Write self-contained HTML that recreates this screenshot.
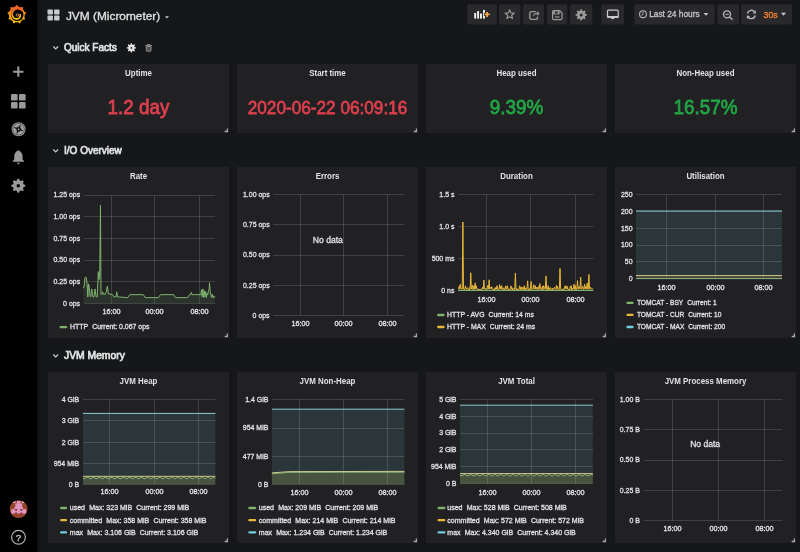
<!DOCTYPE html>
<html><head><meta charset="utf-8"><title>JVM (Micrometer) - Grafana</title>
<style>html,body{margin:0;padding:0;background:#161719;width:800px;height:552px;overflow:hidden;font-family:"Liberation Sans",sans-serif}svg{display:block;will-change:transform}</style>
</head><body>
<svg width="800" height="552" viewBox="0 0 800 552" font-family="&quot;Liberation Sans&quot;, sans-serif"><defs><linearGradient id="sh" x1="0" y1="0" x2="1" y2="0"><stop offset="0" stop-color="#0e0f10"/><stop offset="1" stop-color="#161719"/></linearGradient></defs>
<rect x="37" y="0" width="5" height="552" fill="url(#sh)" rx="0" />
<rect x="0" y="0" width="37" height="552" fill="#000" rx="0" />
<defs><linearGradient id="lg" x1="0" y1="0" x2="0" y2="1"><stop offset="0" stop-color="#f05a28"/><stop offset="1" stop-color="#fbca0a"/></linearGradient></defs>
<polygon points="16.80,4.80 17.58,5.50 18.18,6.55 18.86,6.70 19.53,6.91 20.17,7.18 20.78,7.50 21.93,7.08 22.97,7.05 23.12,8.08 22.90,9.28 23.33,9.83 23.70,10.42 24.02,11.03 24.29,11.67 25.43,12.09 26.25,12.73 25.70,13.62 24.77,14.40 24.74,15.09 24.65,15.78 24.50,16.46 24.29,17.13 24.90,18.18 25.11,19.20 24.12,19.53 22.90,19.52 22.43,20.03 21.92,20.50 21.37,20.93 20.78,21.30 20.58,22.50 20.08,23.42 19.11,23.03 18.18,22.25 17.49,22.34 16.80,22.37 16.11,22.34 15.42,22.25 14.49,23.03 13.52,23.42 13.02,22.50 12.82,21.30 12.23,20.93 11.68,20.50 11.17,20.03 10.70,19.52 9.48,19.53 8.49,19.20 8.70,18.18 9.31,17.13 9.10,16.46 8.95,15.78 8.86,15.09 8.83,14.40 7.90,13.62 7.35,12.73 8.17,12.09 9.31,11.67 9.58,11.03 9.90,10.42 10.27,9.83 10.70,9.28 10.48,8.08 10.63,7.05 11.67,7.08 12.82,7.50 13.43,7.18 14.07,6.91 14.74,6.70 15.42,6.55 16.02,5.50" fill="url(#lg)"/>
<circle cx="17.2" cy="14.8" r="6.3" fill="#000"/>
<polyline points="22.26,10.56 21.78,10.14 21.28,9.77 20.74,9.45 20.19,9.19 19.61,8.99 19.03,8.84 18.44,8.75 17.85,8.72 17.26,8.75 16.69,8.83 16.13,8.97 15.59,9.16 15.08,9.39 14.60,9.68 14.16,10.00 13.75,10.36 13.38,10.76 13.06,11.18 12.78,11.63 12.55,12.10 12.37,12.58 12.23,13.07 12.15,13.57 12.12,14.07 12.13,14.56 12.19,15.04 12.30,15.51 12.45,15.96 12.64,16.39 12.87,16.80 13.13,17.17 13.43,17.51 13.75,17.82 14.10,18.09 14.46,18.33 14.85,18.52 15.24,18.68 15.64,18.79 16.05,18.86 16.45,18.89 16.85,18.88 17.25,18.84 17.62,18.75 17.99,18.63 18.33,18.48 18.66,18.30 18.96,18.09 19.23,17.86 19.48,17.60 19.69,17.33 19.87,17.04 20.03,16.74 20.15,16.43 20.23,16.12 20.29,15.80 20.31,15.49 20.30,15.18 20.26,14.88 20.19,14.59" fill="none" stroke="url(#lg)" stroke-width="1.7" stroke-linecap="round"/>
<circle cx="17.400000000000002" cy="15.0" r="1.3" fill="none" stroke="#e8a070" stroke-width="0.8"/>
<path d="M18.3,66.6 V76.8 M13.1,71.7 H23.5" stroke="#9a9a9a" stroke-width="2.1"/>
<rect x="11" y="94" width="6.6" height="6.6" fill="#9a9a9a" rx="1.2" />
<rect x="11" y="102" width="6.6" height="6.6" fill="#9a9a9a" rx="1.2" />
<rect x="19" y="94" width="6.6" height="6.6" fill="#9a9a9a" rx="1.2" />
<rect x="19" y="102" width="6.6" height="6.6" fill="#9a9a9a" rx="1.2" />
<circle cx="18.6" cy="129.2" r="7.0" fill="#9a9a9a"/>
<circle cx="18.6" cy="129.2" r="5.8" fill="#a0a0a0" stroke="#3a3a3a" stroke-width="0.6"/>
<path d="M18.6,123.6 L19.8,128 L24.2,129.2 L19.8,130.4 L18.6,134.8 L17.4,130.4 L13,129.2 L17.4,128 Z" fill="#141414" transform="rotate(22 18.6 129.2)"/>
<path d="M18.6,125.6 L19.3,128.5 L22.2,129.2 L19.3,129.9 L18.6,132.8 L17.9,129.9 L15,129.2 L17.9,128.5 Z" fill="#141414" transform="rotate(67 18.6 129.2)"/>
<circle cx="18.6" cy="129.2" r="0.8" fill="#bbbbbb"/>
<path d="M18.3,150.3 C15.2,151.6 14.2,154.2 14.2,157.2 L14.2,159.6 L12.8,161.0 V161.8 H24.0 V161.0 L22.6,159.6 L22.6,157.2 C22.6,154.2 21.6,151.6 18.3,150.3 Z" fill="#9a9a9a"/>
<path d="M16.6,162.8 H20.2 L18.4,164.4 Z" fill="#9a9a9a"/>
<polygon points="25.27,185.01 25.27,186.39 23.47,187.27 23.06,188.25 23.71,190.14 22.74,191.11 20.85,190.46 19.87,190.87 18.99,192.67 17.61,192.67 16.73,190.87 15.75,190.46 13.86,191.11 12.89,190.14 13.54,188.25 13.13,187.27 11.33,186.39 11.33,185.01 13.13,184.13 13.54,183.15 12.89,181.26 13.86,180.29 15.75,180.94 16.73,180.53 17.61,178.73 18.99,178.73 19.87,180.53 20.85,180.94 22.74,180.29 23.71,181.26 23.06,183.15 23.47,184.13" fill="#9a9a9a"/>
<circle cx="18.3" cy="185.7" r="1.7" fill="#000"/>
<clipPath id="avc"><circle cx="18.6" cy="509.1" r="8.9"/></clipPath>
<circle cx="18.6" cy="509.1" r="8.9" fill="#96462a"/>
<g clip-path="url(#avc)">
<rect x="13.0" y="500.8" width="2.4" height="2.2" fill="#e6b4c4" rx="0" />
<rect x="16.9" y="500.8" width="3.6" height="2.8" fill="#e096be" rx="0" />
<rect x="21.9" y="500.8" width="2.4" height="2.2" fill="#e6b4c4" rx="0" />
<rect x="15.3" y="503.4" width="6.8" height="3.8" fill="#e096be" rx="0" />
<rect x="14.4" y="507.0" width="8.6" height="2.4" fill="#e096be" rx="0" />
<rect x="11.2" y="509.2" width="15.0" height="4.4" fill="#e096be" rx="0" />
<rect x="15.2" y="509.0" width="1.7" height="1.7" fill="#7a2c34" rx="0" />
<rect x="20.5" y="509.0" width="1.7" height="1.7" fill="#7a2c34" rx="0" />
<rect x="15.2" y="512.6" width="1.7" height="1.5" fill="#7a2c34" rx="0" />
<rect x="20.5" y="512.6" width="1.7" height="1.5" fill="#7a2c34" rx="0" />
</g>
<circle cx="18.5" cy="537.2" r="6.9" fill="none" stroke="#b4b4b4" stroke-width="1.25"/>
<text x="18.60" y="540.80" font-size="9.8" fill="#b4b4b4" font-weight="normal" text-anchor="middle"  stroke="#b4b4b4" stroke-width="0.45">?</text>
<rect x="47.5" y="9.5" width="5.4" height="5.0" fill="#c8c9ca" rx="0.8" />
<rect x="47.5" y="15.5" width="5.4" height="5.0" fill="#c8c9ca" rx="0.8" />
<rect x="54.1" y="9.5" width="5.4" height="5.0" fill="#c8c9ca" rx="0.8" />
<rect x="54.1" y="15.5" width="5.4" height="5.0" fill="#c8c9ca" rx="0.8" />
<text transform="translate(65.90,19.60) scale(1.025,1)" font-size="11.6" fill="#e0e1e2" font-weight="normal" text-anchor="start"  stroke="#e0e1e2" stroke-width="0.3">JVM (Micrometer)</text>
<path d="M165,16.2 L169,16.2 L167,18.4 Z" fill="#c8c9ca"/>
<rect x="467.2" y="4.3" width="29.600000000000023" height="20.2" fill="#29292c" rx="2" />
<rect x="499" y="4.3" width="21.5" height="20.2" fill="#29292c" rx="2" />
<rect x="523" y="4.3" width="21" height="20.2" fill="#29292c" rx="2" />
<rect x="547" y="4.3" width="20.200000000000045" height="20.2" fill="#29292c" rx="2" />
<rect x="570" y="4.3" width="22.299999999999955" height="20.2" fill="#29292c" rx="2" />
<rect x="601.3" y="4.3" width="22.700000000000045" height="20.2" fill="#29292c" rx="2" />
<rect x="634.3" y="4.3" width="80.30000000000007" height="20.2" fill="#29292c" rx="2" />
<rect x="717.3" y="4.3" width="21.700000000000045" height="20.2" fill="#29292c" rx="2" />
<rect x="741.2" y="4.3" width="50.89999999999998" height="20.2" fill="#29292c" rx="2" />
<rect x="474.2" y="12.9" width="1.95" height="5.700000000000001" fill="#ececec" rx="0" />
<rect x="477.1" y="11.1" width="1.95" height="7.500000000000002" fill="#ececec" rx="0" />
<rect x="480.0" y="13.5" width="1.95" height="5.100000000000001" fill="#ececec" rx="0" />
<rect x="483.0" y="9.9" width="1.95" height="8.700000000000001" fill="#ececec" rx="0" />
<path d="M487.1,11.2 V17.6 M483.9,14.4 H490.3" stroke="#262628" stroke-width="3.4"/>
<path d="M487.1,11.9 V17 M484.5,14.4 H489.8" stroke="#f6a545" stroke-width="1.8"/>
<polygon points="509.70,9.70 510.93,12.90 514.36,13.09 511.70,15.25 512.58,18.56 509.70,16.70 506.82,18.56 507.70,15.25 505.04,13.09 508.47,12.90" fill="none" stroke="#9a9a9a" stroke-width="1.1" stroke-linejoin="round"/>
<path d="M535.8,11.6 H531.6 Q529.8,11.6 529.8,13.4 V17.6 Q529.8,19.4 531.6,19.4 H535.8 Q537.6,19.4 537.6,17.6 V16.6" fill="none" stroke="#9a9a9a" stroke-width="1.4"/>
<path d="M532.6,17 C532.6,14 534.4,12.6 537,12.6 V10.6 L540,13.4 L537,16.2 V14.4 C535.2,14.4 533.8,15.2 532.6,17 Z" fill="#9a9a9a" stroke="#29292c" stroke-width="0.5"/>
<path d="M553.6,10.6 H559.6 L562,13 V18.4 Q562,19.6 560.8,19.6 H553.8 Q552.6,19.6 552.6,18.4 V11.6 Q552.6,10.6 553.6,10.6 Z" fill="none" stroke="#9a9a9a" stroke-width="1.2"/>
<rect x="553.2" y="11.2" width="6.4" height="3.2" fill="#9a9a9a" rx="0" />
<rect x="555.0" y="11.6" width="2.6" height="2.0" fill="#29292c" rx="0" />
<rect x="555.0" y="16.4" width="4.6" height="1.2" fill="#9a9a9a" rx="0" />
<polygon points="586.87,14.34 586.87,15.46 585.22,16.12 584.90,16.88 585.61,18.52 584.82,19.31 583.18,18.60 582.42,18.92 581.76,20.57 580.64,20.57 579.98,18.92 579.22,18.60 577.58,19.31 576.79,18.52 577.50,16.88 577.18,16.12 575.53,15.46 575.53,14.34 577.18,13.68 577.50,12.92 576.79,11.28 577.58,10.49 579.22,11.20 579.98,10.88 580.64,9.23 581.76,9.23 582.42,10.88 583.18,11.20 584.82,10.49 585.61,11.28 584.90,12.92 585.22,13.68" fill="#9a9a9a"/>
<circle cx="581.2" cy="14.9" r="1.5" fill="#29292c"/>
<rect x="607.5" y="10.1" width="10.7" height="7.2" rx="1" fill="none" stroke="#c8c9ca" stroke-width="1.2"/>
<rect x="607.2" y="16.0" width="11.3" height="1.9" fill="#c8c9ca" rx="0" />
<rect x="611.3" y="17.8" width="2.8" height="1.3" fill="#c8c9ca" rx="0" />
<circle cx="643" cy="14.2" r="3.4" fill="none" stroke="#b8b9ba" stroke-width="1.1"/>
<path d="M643,11.8 V14.3 L641.5,15.6" fill="none" stroke="#b8b9ba" stroke-width="0.9"/>
<text transform="translate(649.20,17.30) scale(0.935,1)" font-size="8.9" fill="#bfc0c1" font-weight="normal" text-anchor="start"  stroke="#bfc0c1" stroke-width="0.35">Last 24 hours</text>
<path d="M703.6,13 L708.3,13 L706,15.7 Z" fill="#c8c9ca"/>
<circle cx="727" cy="14.3" r="3.5" fill="none" stroke="#b8b9ba" stroke-width="1.3"/>
<path d="M729.6,16.9 L732.6,19.7" stroke="#b8b9ba" stroke-width="1.4"/>
<path d="M725.3,14.3 H728.7" stroke="#b8b9ba" stroke-width="1"/>
<path d="M747.5,13.5 A4,4 0 0 1 755,12.5 M755.2,15.5 A4,4 0 0 1 747.6,16.2" fill="none" stroke="#b8b9ba" stroke-width="1.3"/>
<path d="M755.8,10.3 L755.8,13.6 L752.6,13.4 Z M746.9,19 L746.9,15.6 L750.1,15.9 Z" fill="#b8b9ba"/>
<text transform="translate(763.60,17.60) scale(0.98,1)" font-size="8.9" fill="#e67a30" font-weight="normal" text-anchor="start"  stroke="#e67a30" stroke-width="0.45">30s</text>
<path d="M781,12.8 L786,12.8 L783.5,15.7 Z" fill="#c8c9ca"/>
<path d="M53.3,46.5 L55.7,48.9 L58.1,46.5" fill="none" stroke="#c8c9ca" stroke-width="1.3"/>
<text transform="translate(64.00,50.50) scale(0.955,1)" font-size="10.5" fill="#e0e1e2" font-weight="normal" text-anchor="start"  stroke="#e0e1e2" stroke-width="0.7">Quick Facts</text>
<polygon points="136.08,47.44 136.08,48.36 134.46,48.83 134.22,49.41 135.03,50.88 134.38,51.53 132.91,50.72 132.33,50.96 131.86,52.58 130.94,52.58 130.47,50.96 129.89,50.72 128.42,51.53 127.77,50.88 128.58,49.41 128.34,48.83 126.72,48.36 126.72,47.44 128.34,46.97 128.58,46.39 127.77,44.92 128.42,44.27 129.89,45.08 130.47,44.84 130.94,43.22 131.86,43.22 132.33,44.84 132.91,45.08 134.38,44.27 135.03,44.92 134.22,46.39 134.46,46.97" fill="#e8e8e8"/>
<circle cx="131.4" cy="47.9" r="0.9" fill="#161719"/>
<path d="M145.3,45.6 H152 M147.4,45.6 V44.6 H149.9 V45.6" stroke="#8e8e8e" stroke-width="1" fill="none"/>
<path d="M146.3,46.4 H151 V50.6 Q151,51.2 150.4,51.2 H146.9 Q146.3,51.2 146.3,50.6 Z" fill="#505050" stroke="#8e8e8e" stroke-width="1"/>
<path d="M53.3,149.5 L55.7,151.9 L58.1,149.5" fill="none" stroke="#c8c9ca" stroke-width="1.3"/>
<text transform="translate(64.00,153.50) scale(0.955,1)" font-size="10.5" fill="#e0e1e2" font-weight="normal" text-anchor="start"  stroke="#e0e1e2" stroke-width="0.7">I/O Overview</text>
<path d="M53.3,354.5 L55.7,356.9 L58.1,354.5" fill="none" stroke="#c8c9ca" stroke-width="1.3"/>
<text transform="translate(64.00,358.50) scale(0.985,1)" font-size="10.5" fill="#e0e1e2" font-weight="normal" text-anchor="start"  stroke="#e0e1e2" stroke-width="0.7">JVM Memory</text>
<rect x="48" y="64" width="181" height="69" fill="#212124" rx="0" />
<text transform="translate(138.50,76.00) scale(0.9,1)" font-size="8.8" fill="#e0e1e2" font-weight="bold" text-anchor="middle" >Uptime</text>
<path d="M224.7,131.5 H227.4 V128.6" stroke="#a8a8a8" stroke-width="1.3" fill="none"/>
<text transform="translate(138.50,114.00) scale(0.92,1)" font-size="20.5" fill="#dc3f4d" font-weight="normal" text-anchor="middle"  stroke="#dc3f4d" stroke-width="0.8">1.2 day</text>
<rect x="237" y="64" width="181" height="69" fill="#212124" rx="0" />
<text transform="translate(327.50,76.00) scale(0.9,1)" font-size="8.8" fill="#e0e1e2" font-weight="bold" text-anchor="middle" >Start time</text>
<path d="M413.7,131.5 H416.4 V128.6" stroke="#a8a8a8" stroke-width="1.3" fill="none"/>
<text transform="translate(327.50,113.50) scale(0.905,1)" font-size="19" fill="#dc3f4d" font-weight="normal" text-anchor="middle"  stroke="#dc3f4d" stroke-width="0.75">2020-06-22 06:09:16</text>
<rect x="426" y="64" width="181" height="69" fill="#212124" rx="0" />
<text transform="translate(516.50,76.00) scale(0.9,1)" font-size="8.8" fill="#e0e1e2" font-weight="bold" text-anchor="middle" >Heap used</text>
<path d="M602.7,131.5 H605.4 V128.6" stroke="#a8a8a8" stroke-width="1.3" fill="none"/>
<text transform="translate(516.50,114.00) scale(0.92,1)" font-size="20.5" fill="#22a444" font-weight="normal" text-anchor="middle"  stroke="#22a444" stroke-width="0.8">9.39%</text>
<rect x="615" y="64" width="181" height="69" fill="#212124" rx="0" />
<text transform="translate(705.50,76.00) scale(0.9,1)" font-size="8.8" fill="#e0e1e2" font-weight="bold" text-anchor="middle" >Non-Heap used</text>
<path d="M791.7,131.5 H794.4 V128.6" stroke="#a8a8a8" stroke-width="1.3" fill="none"/>
<text transform="translate(705.50,114.00) scale(0.92,1)" font-size="20.5" fill="#22a444" font-weight="normal" text-anchor="middle"  stroke="#22a444" stroke-width="0.8">16.57%</text>
<rect x="48" y="167" width="181" height="171" fill="#212124" rx="0" />
<text transform="translate(138.50,178.90) scale(0.9,1)" font-size="8.8" fill="#e0e1e2" font-weight="bold" text-anchor="middle" >Rate</text>
<path d="M224.7,336.5 H227.4 V333.6" stroke="#a8a8a8" stroke-width="1.3" fill="none"/>
<rect x="237" y="167" width="181" height="171" fill="#212124" rx="0" />
<text transform="translate(327.50,178.90) scale(0.9,1)" font-size="8.8" fill="#e0e1e2" font-weight="bold" text-anchor="middle" >Errors</text>
<path d="M413.7,336.5 H416.4 V333.6" stroke="#a8a8a8" stroke-width="1.3" fill="none"/>
<rect x="426" y="167" width="181" height="171" fill="#212124" rx="0" />
<text transform="translate(516.50,178.90) scale(0.9,1)" font-size="8.8" fill="#e0e1e2" font-weight="bold" text-anchor="middle" >Duration</text>
<path d="M602.7,336.5 H605.4 V333.6" stroke="#a8a8a8" stroke-width="1.3" fill="none"/>
<rect x="615" y="167" width="181" height="171" fill="#212124" rx="0" />
<text transform="translate(705.50,178.90) scale(0.9,1)" font-size="8.8" fill="#e0e1e2" font-weight="bold" text-anchor="middle" >Utilisation</text>
<path d="M791.7,336.5 H794.4 V333.6" stroke="#a8a8a8" stroke-width="1.3" fill="none"/>
<rect x="48" y="372" width="181" height="171" fill="#212124" rx="0" />
<text transform="translate(138.50,383.90) scale(0.9,1)" font-size="8.8" fill="#e0e1e2" font-weight="bold" text-anchor="middle" >JVM Heap</text>
<path d="M224.7,541.5 H227.4 V538.6" stroke="#a8a8a8" stroke-width="1.3" fill="none"/>
<rect x="237" y="372" width="181" height="171" fill="#212124" rx="0" />
<text transform="translate(327.50,383.90) scale(0.9,1)" font-size="8.8" fill="#e0e1e2" font-weight="bold" text-anchor="middle" >JVM Non-Heap</text>
<path d="M413.7,541.5 H416.4 V538.6" stroke="#a8a8a8" stroke-width="1.3" fill="none"/>
<rect x="426" y="372" width="181" height="171" fill="#212124" rx="0" />
<text transform="translate(516.50,383.90) scale(0.9,1)" font-size="8.8" fill="#e0e1e2" font-weight="bold" text-anchor="middle" >JVM Total</text>
<path d="M602.7,541.5 H605.4 V538.6" stroke="#a8a8a8" stroke-width="1.3" fill="none"/>
<rect x="615" y="372" width="181" height="171" fill="#212124" rx="0" />
<text transform="translate(705.50,383.90) scale(0.9,1)" font-size="8.8" fill="#e0e1e2" font-weight="bold" text-anchor="middle" >JVM Process Memory</text>
<path d="M791.7,541.5 H794.4 V538.6" stroke="#a8a8a8" stroke-width="1.3" fill="none"/>
<path d="M83.45,288.19 L84.17,286.01 L84.90,278.04 L85.62,276.96 L86.35,277.68 L87.07,283.12 L87.80,296.88 L88.52,283.84 L89.25,286.74 L89.97,296.16 L90.70,296.88 L91.78,288.91 L92.87,296.88 L93.96,296.88 L95.04,288.91 L96.13,296.88 L97.22,296.88 L98.30,271.52 L99.03,279.49 L99.75,272.25 L100.48,205.22 L100.99,294.35 L101.93,294.35 L102.65,291.81 L103.38,294.35 L105.19,294.35 L106.28,291.81 L107.36,286.01 L108.45,293.99 L112.43,294.35 L113.88,296.88 L116.06,296.88 L116.78,291.81 L117.51,296.88 L127.60,297.63 L129.88,294.65 L143.35,294.65 L145.10,297.63 L158.40,297.63 L160.50,294.65 L173.63,294.65 L175.38,297.63 L187.63,297.63 L189.38,294.65 L190.61,294.65 L191.31,292.38 L192.01,294.65 L200.76,294.65 L201.46,289.75 L202.16,296.75 L202.86,288.88 L203.56,297.63 L204.26,290.63 L204.96,296.75 L205.66,291.50 L206.36,297.63 L207.06,293.25 L207.76,295.00 L208.46,290.63 L209.16,288.88 L209.51,282.75 L210.21,291.50 L210.91,295.00 L211.61,297.63 L212.31,294.13 L213.01,297.63 L213.71,295.88 L214.41,297.63 L215.11,296.75 L215.11,303.35 L83.45,303.35 Z" fill="#7eb26d" fill-opacity="0.12"/>
<path d="M84,195.5 H215.1" stroke="rgba(255,255,255,0.14)" stroke-width="1"/>
<text transform="translate(80.10,197.40) scale(0.915,1)" font-size="7.6" fill="#e0e1e2" font-weight="normal" text-anchor="end"  stroke="#e0e1e2" stroke-width="0.3">1.25 ops</text>
<path d="M84,216.5 H215.1" stroke="rgba(255,255,255,0.14)" stroke-width="1"/>
<text transform="translate(80.10,219.05) scale(0.915,1)" font-size="7.6" fill="#e0e1e2" font-weight="normal" text-anchor="end"  stroke="#e0e1e2" stroke-width="0.3">1.00 ops</text>
<path d="M84,238.5 H215.1" stroke="rgba(255,255,255,0.14)" stroke-width="1"/>
<text transform="translate(80.10,240.70) scale(0.915,1)" font-size="7.6" fill="#e0e1e2" font-weight="normal" text-anchor="end"  stroke="#e0e1e2" stroke-width="0.3">0.75 ops</text>
<path d="M84,260.5 H215.1" stroke="rgba(255,255,255,0.14)" stroke-width="1"/>
<text transform="translate(80.10,262.35) scale(0.915,1)" font-size="7.6" fill="#e0e1e2" font-weight="normal" text-anchor="end"  stroke="#e0e1e2" stroke-width="0.3">0.50 ops</text>
<path d="M84,281.5 H215.1" stroke="rgba(255,255,255,0.14)" stroke-width="1"/>
<text transform="translate(80.10,284.00) scale(0.915,1)" font-size="7.6" fill="#e0e1e2" font-weight="normal" text-anchor="end"  stroke="#e0e1e2" stroke-width="0.3">0.25 ops</text>
<path d="M84,303.5 H215.1" stroke="rgba(255,255,255,0.14)" stroke-width="1"/>
<text transform="translate(80.10,305.65) scale(0.915,1)" font-size="7.6" fill="#e0e1e2" font-weight="normal" text-anchor="end"  stroke="#e0e1e2" stroke-width="0.3">0 ops</text>
<path d="M111.5,195.5 V303.5" stroke="rgba(255,255,255,0.14)" stroke-width="1"/>
<text x="111.50" y="314.10" font-size="7.25" fill="#e0e1e2" font-weight="normal" text-anchor="middle"  stroke="#e0e1e2" stroke-width="0.3">16:00</text>
<path d="M154.5,195.5 V303.5" stroke="rgba(255,255,255,0.14)" stroke-width="1"/>
<text x="154.50" y="314.10" font-size="7.25" fill="#e0e1e2" font-weight="normal" text-anchor="middle"  stroke="#e0e1e2" stroke-width="0.3">00:00</text>
<path d="M199.5,195.5 V303.5" stroke="rgba(255,255,255,0.14)" stroke-width="1"/>
<text x="199.50" y="314.10" font-size="7.25" fill="#e0e1e2" font-weight="normal" text-anchor="middle"  stroke="#e0e1e2" stroke-width="0.3">08:00</text>
<path d="M83.45,288.19 L84.17,286.01 L84.90,278.04 L85.62,276.96 L86.35,277.68 L87.07,283.12 L87.80,296.88 L88.52,283.84 L89.25,286.74 L89.97,296.16 L90.70,296.88 L91.78,288.91 L92.87,296.88 L93.96,296.88 L95.04,288.91 L96.13,296.88 L97.22,296.88 L98.30,271.52 L99.03,279.49 L99.75,272.25 L100.48,205.22 L100.99,294.35 L101.93,294.35 L102.65,291.81 L103.38,294.35 L105.19,294.35 L106.28,291.81 L107.36,286.01 L108.45,293.99 L112.43,294.35 L113.88,296.88 L116.06,296.88 L116.78,291.81 L117.51,296.88 L127.60,297.63 L129.88,294.65 L143.35,294.65 L145.10,297.63 L158.40,297.63 L160.50,294.65 L173.63,294.65 L175.38,297.63 L187.63,297.63 L189.38,294.65 L190.61,294.65 L191.31,292.38 L192.01,294.65 L200.76,294.65 L201.46,289.75 L202.16,296.75 L202.86,288.88 L203.56,297.63 L204.26,290.63 L204.96,296.75 L205.66,291.50 L206.36,297.63 L207.06,293.25 L207.76,295.00 L208.46,290.63 L209.16,288.88 L209.51,282.75 L210.21,291.50 L210.91,295.00 L211.61,297.63 L212.31,294.13 L213.01,297.63 L213.71,295.88 L214.41,297.63 L215.11,296.75" fill="none" stroke="#7eb26d" stroke-width="1" stroke-linejoin="round"/>
<path d="M60.6,327.1 H66.2" stroke="#7eb26d" stroke-width="2.3" stroke-linecap="round"/>
<text transform="translate(70.05,329.40) scale(0.955,1)" font-size="7.25" fill="#e0e1e2" font-weight="normal" text-anchor="start"  stroke="#e0e1e2" stroke-width="0.3">HTTP<tspan dx="4.3">Current: 0.067 ops</tspan></text>
<path d="M273,194.5 H404.5" stroke="rgba(255,255,255,0.14)" stroke-width="1"/>
<text transform="translate(269.60,196.90) scale(0.915,1)" font-size="7.6" fill="#e0e1e2" font-weight="normal" text-anchor="end"  stroke="#e0e1e2" stroke-width="0.3">1.00 ops</text>
<path d="M273,224.5 H404.5" stroke="rgba(255,255,255,0.14)" stroke-width="1"/>
<text transform="translate(269.60,227.10) scale(0.915,1)" font-size="7.6" fill="#e0e1e2" font-weight="normal" text-anchor="end"  stroke="#e0e1e2" stroke-width="0.3">0.75 ops</text>
<path d="M273,255.5 H404.5" stroke="rgba(255,255,255,0.14)" stroke-width="1"/>
<text transform="translate(269.60,257.30) scale(0.915,1)" font-size="7.6" fill="#e0e1e2" font-weight="normal" text-anchor="end"  stroke="#e0e1e2" stroke-width="0.3">0.50 ops</text>
<path d="M273,285.5 H404.5" stroke="rgba(255,255,255,0.14)" stroke-width="1"/>
<text transform="translate(269.60,287.50) scale(0.915,1)" font-size="7.6" fill="#e0e1e2" font-weight="normal" text-anchor="end"  stroke="#e0e1e2" stroke-width="0.3">0.25 ops</text>
<path d="M273,315.5 H404.5" stroke="rgba(255,255,255,0.14)" stroke-width="1"/>
<text transform="translate(269.60,317.70) scale(0.915,1)" font-size="7.6" fill="#e0e1e2" font-weight="normal" text-anchor="end"  stroke="#e0e1e2" stroke-width="0.3">0 ops</text>
<path d="M300.5,194.5 V315.5" stroke="rgba(255,255,255,0.14)" stroke-width="1"/>
<text x="300.50" y="326.30" font-size="7.25" fill="#e0e1e2" font-weight="normal" text-anchor="middle"  stroke="#e0e1e2" stroke-width="0.3">16:00</text>
<path d="M343.5,194.5 V315.5" stroke="rgba(255,255,255,0.14)" stroke-width="1"/>
<text x="343.50" y="326.30" font-size="7.25" fill="#e0e1e2" font-weight="normal" text-anchor="middle"  stroke="#e0e1e2" stroke-width="0.3">00:00</text>
<path d="M387.5,194.5 V315.5" stroke="rgba(255,255,255,0.14)" stroke-width="1"/>
<text x="387.50" y="326.30" font-size="7.25" fill="#e0e1e2" font-weight="normal" text-anchor="middle"  stroke="#e0e1e2" stroke-width="0.3">08:00</text>
<text transform="translate(327.80,242.50) scale(0.96,1)" font-size="8.9" fill="#e0e1e2" font-weight="normal" text-anchor="middle"  stroke="#e0e1e2" stroke-width="0.3">No data</text>
<path d="M458.20,290.30 L593.30,290.30 L593.30,290.6 L458.20,290.6 Z" fill="#7eb26d" fill-opacity="0.12"/>
<path d="M458.15,289.06 L458.68,288.76 L459.20,286.29 L459.64,288.85 L460.25,284.13 L460.86,288.85 L461.30,289.03 L461.83,288.91 L462.26,288.85 L462.88,222.00 L463.49,288.85 L463.93,288.66 L464.45,289.62 L464.89,288.85 L465.50,285.88 L466.11,288.85 L466.55,288.90 L467.08,288.51 L467.60,287.70 L468.13,289.77 L468.65,289.40 L469.18,289.77 L469.70,287.58 L470.14,288.85 L470.75,272.75 L471.36,288.85 L471.80,288.25 L471.89,288.85 L472.50,285.00 L473.11,288.85 L473.55,289.84 L474.08,285.70 L474.51,288.85 L475.13,282.90 L475.74,288.85 L476.18,285.70 L476.70,288.42 L477.23,288.57 L477.75,289.66 L478.28,289.88 L478.80,288.85 L479.33,289.82 L479.85,289.61 L480.38,289.52 L480.90,289.86 L481.43,289.03 L481.95,289.09 L482.48,287.32 L483.00,288.88 L483.26,288.85 L483.88,280.10 L484.49,288.85 L484.93,288.47 L485.45,288.93 L485.98,288.38 L486.50,289.05 L487.03,289.45 L487.55,285.70 L488.08,285.70 L488.51,288.85 L489.13,279.75 L489.74,288.85 L490.18,287.34 L490.70,288.18 L491.14,288.85 L491.75,286.75 L492.36,288.85 L492.80,289.37 L493.33,289.54 L493.85,289.43 L494.38,289.80 L494.90,287.87 L495.43,289.19 L495.95,287.28 L496.48,289.22 L497.00,285.70 L497.53,287.27 L498.05,289.90 L498.58,289.57 L499.01,288.85 L499.63,284.65 L500.24,288.85 L500.68,286.53 L501.20,289.01 L501.73,285.70 L502.25,289.19 L502.78,289.80 L503.30,288.51 L503.83,287.79 L504.35,289.46 L504.88,289.78 L505.14,288.85 L505.75,285.88 L506.37,288.85 L506.80,289.34 L507.33,285.70 L507.85,287.92 L508.38,289.73 L508.90,289.51 L509.43,289.75 L509.95,289.82 L510.39,288.85 L511.00,285.88 L511.62,288.85 L512.05,287.67 L512.58,289.63 L513.10,288.76 L513.63,289.07 L514.15,289.61 L514.68,288.06 L514.77,288.85 L515.38,273.10 L515.99,288.85 L516.43,289.71 L516.95,288.46 L517.48,289.73 L518.00,289.14 L518.53,289.57 L519.05,289.46 L519.58,285.70 L520.10,287.63 L520.63,289.40 L521.15,286.88 L521.68,289.57 L522.20,289.20 L522.73,287.21 L523.25,288.47 L523.78,289.76 L524.30,285.70 L524.83,289.57 L525.35,289.49 L525.88,287.83 L526.40,289.35 L526.93,289.41 L527.02,288.85 L527.63,280.80 L528.24,288.85 L528.68,289.80 L529.20,289.77 L529.73,288.68 L530.25,289.51 L530.52,288.85 L531.13,281.50 L531.74,288.85 L532.18,288.62 L532.70,289.25 L533.14,288.85 L533.75,284.65 L534.37,288.85 L534.80,289.06 L535.33,285.70 L535.85,288.98 L536.38,288.71 L536.90,287.08 L537.43,289.62 L537.95,289.67 L538.48,286.56 L539.00,287.52 L539.27,288.85 L539.88,283.60 L540.49,288.85 L540.93,289.50 L541.45,289.61 L541.98,288.02 L542.50,285.96 L543.03,289.60 L543.55,285.71 L544.08,286.91 L544.60,288.61 L545.13,289.14 L545.39,288.85 L546.00,275.90 L546.62,288.85 L547.05,289.75 L547.58,289.85 L548.10,285.70 L548.63,289.52 L549.15,288.20 L549.68,289.49 L550.20,287.47 L550.73,288.63 L551.25,289.42 L551.78,289.63 L552.30,288.12 L552.83,289.80 L553.35,289.54 L553.88,288.76 L554.40,287.23 L554.93,288.57 L555.46,289.44 L555.89,288.85 L556.51,285.35 L557.12,288.85 L557.56,286.41 L558.08,289.58 L558.61,289.88 L559.13,289.46 L559.39,288.85 L560.01,268.38 L560.62,288.85 L561.06,289.08 L561.58,289.82 L562.11,289.63 L562.63,289.26 L563.16,288.72 L563.68,289.71 L564.21,289.27 L564.73,286.80 L565.26,285.70 L565.78,288.41 L566.31,288.26 L566.39,288.85 L567.01,285.88 L567.62,288.85 L568.06,288.67 L568.58,289.69 L569.11,289.85 L569.63,289.88 L570.16,286.53 L570.68,288.21 L571.21,285.70 L571.73,289.87 L572.26,288.49 L572.78,288.98 L573.31,288.07 L573.39,288.85 L574.01,284.13 L574.62,288.85 L575.06,289.37 L575.58,285.70 L576.11,289.79 L576.63,288.80 L576.89,288.85 L577.51,280.63 L578.12,288.85 L578.56,288.03 L579.08,286.68 L579.61,288.03 L580.04,288.85 L580.66,277.13 L581.27,288.85 L581.71,288.20 L582.23,287.70 L582.76,286.45 L583.28,289.30 L583.81,288.29 L583.89,288.85 L584.51,284.13 L585.12,288.85 L585.56,286.67 L586.08,287.04 L586.52,288.85 L587.13,283.25 L587.74,288.85 L588.18,289.15 L588.27,288.85 L588.88,274.50 L589.49,288.85 L589.93,287.72 L590.46,287.12 L590.98,288.71 L591.51,288.53 L592.03,289.23 L592.56,288.68 L593.08,288.59 L593.08,290.6 L458.15,290.6 Z" fill="#eab839" fill-opacity="0.12"/>
<path d="M458.2,194.5 H593.3" stroke="rgba(255,255,255,0.14)" stroke-width="1"/>
<text transform="translate(454.40,196.90) scale(0.915,1)" font-size="7.6" fill="#e0e1e2" font-weight="normal" text-anchor="end"  stroke="#e0e1e2" stroke-width="0.3">1.5 s</text>
<path d="M458.2,226.5 H593.3" stroke="rgba(255,255,255,0.14)" stroke-width="1"/>
<text transform="translate(454.40,228.90) scale(0.915,1)" font-size="7.6" fill="#e0e1e2" font-weight="normal" text-anchor="end"  stroke="#e0e1e2" stroke-width="0.3">1.0 s</text>
<path d="M458.2,258.5 H593.3" stroke="rgba(255,255,255,0.14)" stroke-width="1"/>
<text transform="translate(454.40,260.90) scale(0.915,1)" font-size="7.6" fill="#e0e1e2" font-weight="normal" text-anchor="end"  stroke="#e0e1e2" stroke-width="0.3">500 ms</text>
<path d="M458.2,290.5 H593.3" stroke="rgba(255,255,255,0.14)" stroke-width="1"/>
<text transform="translate(454.40,292.90) scale(0.915,1)" font-size="7.6" fill="#e0e1e2" font-weight="normal" text-anchor="end"  stroke="#e0e1e2" stroke-width="0.3">0 ns</text>
<path d="M486.5,194.5 V290.5" stroke="rgba(255,255,255,0.14)" stroke-width="1"/>
<text x="486.50" y="301.50" font-size="7.25" fill="#e0e1e2" font-weight="normal" text-anchor="middle"  stroke="#e0e1e2" stroke-width="0.3">16:00</text>
<path d="M530.5,194.5 V290.5" stroke="rgba(255,255,255,0.14)" stroke-width="1"/>
<text x="530.50" y="301.50" font-size="7.25" fill="#e0e1e2" font-weight="normal" text-anchor="middle"  stroke="#e0e1e2" stroke-width="0.3">00:00</text>
<path d="M575.5,194.5 V290.5" stroke="rgba(255,255,255,0.14)" stroke-width="1"/>
<text x="575.50" y="301.50" font-size="7.25" fill="#e0e1e2" font-weight="normal" text-anchor="middle"  stroke="#e0e1e2" stroke-width="0.3">08:00</text>
<path d="M458.20,290.30 L593.30,290.30" fill="none" stroke="#7eb26d" stroke-width="1.3" stroke-linejoin="round"/>
<path d="M458.15,289.06 L458.68,288.76 L459.20,286.29 L459.64,288.85 L460.25,284.13 L460.86,288.85 L461.30,289.03 L461.83,288.91 L462.26,288.85 L462.88,222.00 L463.49,288.85 L463.93,288.66 L464.45,289.62 L464.89,288.85 L465.50,285.88 L466.11,288.85 L466.55,288.90 L467.08,288.51 L467.60,287.70 L468.13,289.77 L468.65,289.40 L469.18,289.77 L469.70,287.58 L470.14,288.85 L470.75,272.75 L471.36,288.85 L471.80,288.25 L471.89,288.85 L472.50,285.00 L473.11,288.85 L473.55,289.84 L474.08,285.70 L474.51,288.85 L475.13,282.90 L475.74,288.85 L476.18,285.70 L476.70,288.42 L477.23,288.57 L477.75,289.66 L478.28,289.88 L478.80,288.85 L479.33,289.82 L479.85,289.61 L480.38,289.52 L480.90,289.86 L481.43,289.03 L481.95,289.09 L482.48,287.32 L483.00,288.88 L483.26,288.85 L483.88,280.10 L484.49,288.85 L484.93,288.47 L485.45,288.93 L485.98,288.38 L486.50,289.05 L487.03,289.45 L487.55,285.70 L488.08,285.70 L488.51,288.85 L489.13,279.75 L489.74,288.85 L490.18,287.34 L490.70,288.18 L491.14,288.85 L491.75,286.75 L492.36,288.85 L492.80,289.37 L493.33,289.54 L493.85,289.43 L494.38,289.80 L494.90,287.87 L495.43,289.19 L495.95,287.28 L496.48,289.22 L497.00,285.70 L497.53,287.27 L498.05,289.90 L498.58,289.57 L499.01,288.85 L499.63,284.65 L500.24,288.85 L500.68,286.53 L501.20,289.01 L501.73,285.70 L502.25,289.19 L502.78,289.80 L503.30,288.51 L503.83,287.79 L504.35,289.46 L504.88,289.78 L505.14,288.85 L505.75,285.88 L506.37,288.85 L506.80,289.34 L507.33,285.70 L507.85,287.92 L508.38,289.73 L508.90,289.51 L509.43,289.75 L509.95,289.82 L510.39,288.85 L511.00,285.88 L511.62,288.85 L512.05,287.67 L512.58,289.63 L513.10,288.76 L513.63,289.07 L514.15,289.61 L514.68,288.06 L514.77,288.85 L515.38,273.10 L515.99,288.85 L516.43,289.71 L516.95,288.46 L517.48,289.73 L518.00,289.14 L518.53,289.57 L519.05,289.46 L519.58,285.70 L520.10,287.63 L520.63,289.40 L521.15,286.88 L521.68,289.57 L522.20,289.20 L522.73,287.21 L523.25,288.47 L523.78,289.76 L524.30,285.70 L524.83,289.57 L525.35,289.49 L525.88,287.83 L526.40,289.35 L526.93,289.41 L527.02,288.85 L527.63,280.80 L528.24,288.85 L528.68,289.80 L529.20,289.77 L529.73,288.68 L530.25,289.51 L530.52,288.85 L531.13,281.50 L531.74,288.85 L532.18,288.62 L532.70,289.25 L533.14,288.85 L533.75,284.65 L534.37,288.85 L534.80,289.06 L535.33,285.70 L535.85,288.98 L536.38,288.71 L536.90,287.08 L537.43,289.62 L537.95,289.67 L538.48,286.56 L539.00,287.52 L539.27,288.85 L539.88,283.60 L540.49,288.85 L540.93,289.50 L541.45,289.61 L541.98,288.02 L542.50,285.96 L543.03,289.60 L543.55,285.71 L544.08,286.91 L544.60,288.61 L545.13,289.14 L545.39,288.85 L546.00,275.90 L546.62,288.85 L547.05,289.75 L547.58,289.85 L548.10,285.70 L548.63,289.52 L549.15,288.20 L549.68,289.49 L550.20,287.47 L550.73,288.63 L551.25,289.42 L551.78,289.63 L552.30,288.12 L552.83,289.80 L553.35,289.54 L553.88,288.76 L554.40,287.23 L554.93,288.57 L555.46,289.44 L555.89,288.85 L556.51,285.35 L557.12,288.85 L557.56,286.41 L558.08,289.58 L558.61,289.88 L559.13,289.46 L559.39,288.85 L560.01,268.38 L560.62,288.85 L561.06,289.08 L561.58,289.82 L562.11,289.63 L562.63,289.26 L563.16,288.72 L563.68,289.71 L564.21,289.27 L564.73,286.80 L565.26,285.70 L565.78,288.41 L566.31,288.26 L566.39,288.85 L567.01,285.88 L567.62,288.85 L568.06,288.67 L568.58,289.69 L569.11,289.85 L569.63,289.88 L570.16,286.53 L570.68,288.21 L571.21,285.70 L571.73,289.87 L572.26,288.49 L572.78,288.98 L573.31,288.07 L573.39,288.85 L574.01,284.13 L574.62,288.85 L575.06,289.37 L575.58,285.70 L576.11,289.79 L576.63,288.80 L576.89,288.85 L577.51,280.63 L578.12,288.85 L578.56,288.03 L579.08,286.68 L579.61,288.03 L580.04,288.85 L580.66,277.13 L581.27,288.85 L581.71,288.20 L582.23,287.70 L582.76,286.45 L583.28,289.30 L583.81,288.29 L583.89,288.85 L584.51,284.13 L585.12,288.85 L585.56,286.67 L586.08,287.04 L586.52,288.85 L587.13,283.25 L587.74,288.85 L588.18,289.15 L588.27,288.85 L588.88,274.50 L589.49,288.85 L589.93,287.72 L590.46,287.12 L590.98,288.71 L591.51,288.53 L592.03,289.23 L592.56,288.68 L593.08,288.59" fill="none" stroke="#eab839" stroke-width="1" stroke-linejoin="round"/>
<path d="M438.2,315.0 H443.5" stroke="#7eb26d" stroke-width="2.3" stroke-linecap="round"/>
<text transform="translate(447.10,317.30) scale(0.945,1)" font-size="7.25" fill="#e0e1e2" font-weight="normal" text-anchor="start"  stroke="#e0e1e2" stroke-width="0.3">HTTP - AVG<tspan dx="4.3">Current: 14 ms</tspan></text>
<path d="M438.2,327.0 H443.5" stroke="#eab839" stroke-width="2.3" stroke-linecap="round"/>
<text transform="translate(447.10,329.30) scale(0.945,1)" font-size="7.25" fill="#e0e1e2" font-weight="normal" text-anchor="start"  stroke="#e0e1e2" stroke-width="0.3">HTTP - MAX<tspan dx="4.3">Current: 24 ms</tspan></text>
<path d="M636.00,211.00 L782.00,211.00 L782.00,278.6 L636.00,278.6 Z" fill="#6ed0e0" fill-opacity="0.12"/>
<path d="M636.00,275.60 L782.00,275.60 L782.00,278.6 L636.00,278.6 Z" fill="#eab839" fill-opacity="0.12"/>
<path d="M636.00,278.60 L782.00,278.60 L782.00,278.6 L636.00,278.6 Z" fill="#7eb26d" fill-opacity="0.12"/>
<path d="M636,194.5 H782" stroke="rgba(255,255,255,0.14)" stroke-width="1"/>
<text transform="translate(632.50,196.90) scale(0.915,1)" font-size="7.6" fill="#e0e1e2" font-weight="normal" text-anchor="end"  stroke="#e0e1e2" stroke-width="0.3">250</text>
<path d="M636,211.5 H782" stroke="rgba(255,255,255,0.14)" stroke-width="1"/>
<text transform="translate(632.50,213.70) scale(0.915,1)" font-size="7.6" fill="#e0e1e2" font-weight="normal" text-anchor="end"  stroke="#e0e1e2" stroke-width="0.3">200</text>
<path d="M636,228.5 H782" stroke="rgba(255,255,255,0.14)" stroke-width="1"/>
<text transform="translate(632.50,230.50) scale(0.915,1)" font-size="7.6" fill="#e0e1e2" font-weight="normal" text-anchor="end"  stroke="#e0e1e2" stroke-width="0.3">150</text>
<path d="M636,245.5 H782" stroke="rgba(255,255,255,0.14)" stroke-width="1"/>
<text transform="translate(632.50,247.30) scale(0.915,1)" font-size="7.6" fill="#e0e1e2" font-weight="normal" text-anchor="end"  stroke="#e0e1e2" stroke-width="0.3">100</text>
<path d="M636,261.5 H782" stroke="rgba(255,255,255,0.14)" stroke-width="1"/>
<text transform="translate(632.50,264.10) scale(0.915,1)" font-size="7.6" fill="#e0e1e2" font-weight="normal" text-anchor="end"  stroke="#e0e1e2" stroke-width="0.3">50</text>
<path d="M636,278.5 H782" stroke="rgba(255,255,255,0.14)" stroke-width="1"/>
<text transform="translate(632.50,280.90) scale(0.915,1)" font-size="7.6" fill="#e0e1e2" font-weight="normal" text-anchor="end"  stroke="#e0e1e2" stroke-width="0.3">0</text>
<path d="M666.5,194.5 V278.5" stroke="rgba(255,255,255,0.14)" stroke-width="1"/>
<text x="666.50" y="290.00" font-size="7.25" fill="#e0e1e2" font-weight="normal" text-anchor="middle"  stroke="#e0e1e2" stroke-width="0.3">16:00</text>
<path d="M715.5,194.5 V278.5" stroke="rgba(255,255,255,0.14)" stroke-width="1"/>
<text x="715.50" y="290.00" font-size="7.25" fill="#e0e1e2" font-weight="normal" text-anchor="middle"  stroke="#e0e1e2" stroke-width="0.3">00:00</text>
<path d="M763.5,194.5 V278.5" stroke="rgba(255,255,255,0.14)" stroke-width="1"/>
<text x="763.50" y="290.00" font-size="7.25" fill="#e0e1e2" font-weight="normal" text-anchor="middle"  stroke="#e0e1e2" stroke-width="0.3">08:00</text>
<path d="M636.00,211.00 L782.00,211.00" fill="none" stroke="#8ccad6" stroke-width="1" stroke-linejoin="round"/>
<path d="M636.00,275.60 L782.00,275.60" fill="none" stroke="#d6cb8c" stroke-width="1" stroke-linejoin="round"/>
<path d="M636.00,278.60 L782.00,278.60" fill="none" stroke="#8fb882" stroke-width="1" stroke-linejoin="round"/>
<path d="M627.5,302.9 H632.5" stroke="#7eb26d" stroke-width="2.3" stroke-linecap="round"/>
<text transform="translate(636.90,305.20) scale(0.915,1)" font-size="7.25" fill="#e0e1e2" font-weight="normal" text-anchor="start"  stroke="#e0e1e2" stroke-width="0.3">TOMCAT - BSY<tspan dx="4.3">Current: 1</tspan></text>
<path d="M627.5,314.9 H632.5" stroke="#eab839" stroke-width="2.3" stroke-linecap="round"/>
<text transform="translate(636.90,317.20) scale(0.915,1)" font-size="7.25" fill="#e0e1e2" font-weight="normal" text-anchor="start"  stroke="#e0e1e2" stroke-width="0.3">TOMCAT - CUR<tspan dx="4.3">Current: 10</tspan></text>
<path d="M627.5,327.0 H632.5" stroke="#6ed0e0" stroke-width="2.3" stroke-linecap="round"/>
<text transform="translate(636.90,329.30) scale(0.915,1)" font-size="7.25" fill="#e0e1e2" font-weight="normal" text-anchor="start"  stroke="#e0e1e2" stroke-width="0.3">TOMCAT - MAX<tspan dx="4.3">Current: 200</tspan></text>
<path d="M82.90,413.40 L215.40,413.40 L215.40,484.25 L82.90,484.25 Z" fill="#6ed0e0" fill-opacity="0.12"/>
<path d="M82.90,476.30 L215.40,476.30 L215.40,484.25 L82.90,484.25 Z" fill="#eab839" fill-opacity="0.12"/>
<path d="M82.90,478.00 L83.90,478.61 L84.91,478.61 L85.91,478.00 L86.92,477.39 L87.92,477.39 L88.92,478.00 L89.93,478.61 L90.93,478.61 L91.93,478.00 L92.94,477.39 L93.94,477.39 L94.95,478.00 L95.95,478.61 L96.95,478.61 L97.96,478.00 L98.96,477.39 L99.96,477.39 L100.97,478.00 L101.97,478.61 L102.98,478.61 L103.98,478.00 L104.98,477.39 L105.99,477.39 L106.99,478.00 L107.99,478.61 L109.00,478.61 L110.00,478.00 L111.01,477.39 L112.01,477.39 L113.01,478.00 L114.02,478.61 L115.02,478.61 L116.03,478.00 L117.03,477.39 L118.03,477.39 L119.04,478.00 L120.04,478.61 L121.04,478.61 L122.05,478.00 L123.05,477.39 L124.06,477.39 L125.06,478.00 L126.06,478.61 L127.07,478.61 L128.07,478.00 L129.07,477.39 L130.08,477.39 L131.08,478.00 L132.09,478.61 L133.09,478.61 L134.09,478.00 L135.10,477.39 L136.10,477.39 L137.10,478.00 L138.11,478.61 L139.11,478.61 L140.12,478.00 L141.12,477.39 L142.12,477.39 L143.13,478.00 L144.13,478.61 L145.13,478.61 L146.14,478.00 L147.14,477.39 L148.15,477.39 L149.15,478.00 L150.15,478.61 L151.16,478.61 L152.16,478.00 L153.17,477.39 L154.17,477.39 L155.17,478.00 L156.18,478.61 L157.18,478.61 L158.18,478.00 L159.19,477.39 L160.19,477.39 L161.20,478.00 L162.20,478.61 L163.20,478.61 L164.21,478.00 L165.21,477.39 L166.21,477.39 L167.22,478.00 L168.22,478.61 L169.23,478.61 L170.23,478.00 L171.23,477.39 L172.24,477.39 L173.24,478.00 L174.24,478.61 L175.25,478.61 L176.25,478.00 L177.26,477.39 L178.26,477.39 L179.26,478.00 L180.27,478.61 L181.27,478.61 L182.28,478.00 L183.28,477.39 L184.28,477.39 L185.29,478.00 L186.29,478.61 L187.29,478.61 L188.30,478.00 L189.30,477.39 L190.31,477.39 L191.31,478.00 L192.31,478.61 L193.32,478.61 L194.32,478.00 L195.32,477.39 L196.33,477.39 L197.33,478.00 L198.34,478.61 L199.34,478.61 L200.34,478.00 L201.35,477.39 L202.35,477.39 L203.35,478.00 L204.36,478.61 L205.36,478.61 L206.37,478.00 L207.37,477.39 L208.37,477.39 L209.38,478.00 L210.38,478.61 L211.38,478.61 L212.39,478.00 L213.39,477.39 L214.40,477.39 L215.40,478.00 L215.40,484.25 L82.90,484.25 Z" fill="#7eb26d" fill-opacity="0.12"/>
<path d="M82.9,399.5 H215.4" stroke="rgba(255,255,255,0.14)" stroke-width="1"/>
<text transform="translate(79.10,402.20) scale(0.915,1)" font-size="7.6" fill="#e0e1e2" font-weight="normal" text-anchor="end"  stroke="#e0e1e2" stroke-width="0.3">4 GiB</text>
<path d="M82.9,420.5 H215.4" stroke="rgba(255,255,255,0.14)" stroke-width="1"/>
<text transform="translate(79.10,423.20) scale(0.915,1)" font-size="7.6" fill="#e0e1e2" font-weight="normal" text-anchor="end"  stroke="#e0e1e2" stroke-width="0.3">3 GiB</text>
<path d="M82.9,442.5 H215.4" stroke="rgba(255,255,255,0.14)" stroke-width="1"/>
<text transform="translate(79.10,444.55) scale(0.915,1)" font-size="7.6" fill="#e0e1e2" font-weight="normal" text-anchor="end"  stroke="#e0e1e2" stroke-width="0.3">2 GiB</text>
<path d="M82.9,463.5 H215.4" stroke="rgba(255,255,255,0.14)" stroke-width="1"/>
<text transform="translate(79.10,465.55) scale(0.915,1)" font-size="7.6" fill="#e0e1e2" font-weight="normal" text-anchor="end"  stroke="#e0e1e2" stroke-width="0.3">954 MiB</text>
<path d="M82.9,484.5 H215.4" stroke="rgba(255,255,255,0.14)" stroke-width="1"/>
<text transform="translate(79.10,486.55) scale(0.915,1)" font-size="7.6" fill="#e0e1e2" font-weight="normal" text-anchor="end"  stroke="#e0e1e2" stroke-width="0.3">0 B</text>
<path d="M109.5,399.5 V484.5" stroke="rgba(255,255,255,0.14)" stroke-width="1"/>
<text x="109.50" y="494.20" font-size="7.25" fill="#e0e1e2" font-weight="normal" text-anchor="middle"  stroke="#e0e1e2" stroke-width="0.3">16:00</text>
<path d="M154.5,399.5 V484.5" stroke="rgba(255,255,255,0.14)" stroke-width="1"/>
<text x="154.50" y="494.20" font-size="7.25" fill="#e0e1e2" font-weight="normal" text-anchor="middle"  stroke="#e0e1e2" stroke-width="0.3">00:00</text>
<path d="M198.5,399.5 V484.5" stroke="rgba(255,255,255,0.14)" stroke-width="1"/>
<text x="198.50" y="494.20" font-size="7.25" fill="#e0e1e2" font-weight="normal" text-anchor="middle"  stroke="#e0e1e2" stroke-width="0.3">08:00</text>
<path d="M82.90,413.40 L215.40,413.40" fill="none" stroke="#8ccad6" stroke-width="1" stroke-linejoin="round"/>
<path d="M82.90,476.30 L215.40,476.30" fill="none" stroke="#d6cb8c" stroke-width="1" stroke-linejoin="round"/>
<path d="M82.90,478.00 L83.90,478.61 L84.91,478.61 L85.91,478.00 L86.92,477.39 L87.92,477.39 L88.92,478.00 L89.93,478.61 L90.93,478.61 L91.93,478.00 L92.94,477.39 L93.94,477.39 L94.95,478.00 L95.95,478.61 L96.95,478.61 L97.96,478.00 L98.96,477.39 L99.96,477.39 L100.97,478.00 L101.97,478.61 L102.98,478.61 L103.98,478.00 L104.98,477.39 L105.99,477.39 L106.99,478.00 L107.99,478.61 L109.00,478.61 L110.00,478.00 L111.01,477.39 L112.01,477.39 L113.01,478.00 L114.02,478.61 L115.02,478.61 L116.03,478.00 L117.03,477.39 L118.03,477.39 L119.04,478.00 L120.04,478.61 L121.04,478.61 L122.05,478.00 L123.05,477.39 L124.06,477.39 L125.06,478.00 L126.06,478.61 L127.07,478.61 L128.07,478.00 L129.07,477.39 L130.08,477.39 L131.08,478.00 L132.09,478.61 L133.09,478.61 L134.09,478.00 L135.10,477.39 L136.10,477.39 L137.10,478.00 L138.11,478.61 L139.11,478.61 L140.12,478.00 L141.12,477.39 L142.12,477.39 L143.13,478.00 L144.13,478.61 L145.13,478.61 L146.14,478.00 L147.14,477.39 L148.15,477.39 L149.15,478.00 L150.15,478.61 L151.16,478.61 L152.16,478.00 L153.17,477.39 L154.17,477.39 L155.17,478.00 L156.18,478.61 L157.18,478.61 L158.18,478.00 L159.19,477.39 L160.19,477.39 L161.20,478.00 L162.20,478.61 L163.20,478.61 L164.21,478.00 L165.21,477.39 L166.21,477.39 L167.22,478.00 L168.22,478.61 L169.23,478.61 L170.23,478.00 L171.23,477.39 L172.24,477.39 L173.24,478.00 L174.24,478.61 L175.25,478.61 L176.25,478.00 L177.26,477.39 L178.26,477.39 L179.26,478.00 L180.27,478.61 L181.27,478.61 L182.28,478.00 L183.28,477.39 L184.28,477.39 L185.29,478.00 L186.29,478.61 L187.29,478.61 L188.30,478.00 L189.30,477.39 L190.31,477.39 L191.31,478.00 L192.31,478.61 L193.32,478.61 L194.32,478.00 L195.32,477.39 L196.33,477.39 L197.33,478.00 L198.34,478.61 L199.34,478.61 L200.34,478.00 L201.35,477.39 L202.35,477.39 L203.35,478.00 L204.36,478.61 L205.36,478.61 L206.37,478.00 L207.37,477.39 L208.37,477.39 L209.38,478.00 L210.38,478.61 L211.38,478.61 L212.39,478.00 L213.39,477.39 L214.40,477.39 L215.40,478.00" fill="none" stroke="#8fb882" stroke-width="1" stroke-linejoin="round"/>
<path d="M61.2,508.0 H66.0" stroke="#7eb26d" stroke-width="2.3" stroke-linecap="round"/>
<text transform="translate(69.80,510.30) scale(0.97,1)" font-size="7.25" fill="#e0e1e2" font-weight="normal" text-anchor="start"  stroke="#e0e1e2" stroke-width="0.3">used<tspan dx="4.3">Max: 323 MiB</tspan><tspan dx="4.3">Current: 299 MiB</tspan></text>
<path d="M61.2,520.2 H66.0" stroke="#eab839" stroke-width="2.3" stroke-linecap="round"/>
<text transform="translate(69.80,522.50) scale(0.97,1)" font-size="7.25" fill="#e0e1e2" font-weight="normal" text-anchor="start"  stroke="#e0e1e2" stroke-width="0.3">committed<tspan dx="4.3">Max: 358 MiB</tspan><tspan dx="4.3">Current: 358 MiB</tspan></text>
<path d="M61.2,532.4 H66.0" stroke="#6ed0e0" stroke-width="2.3" stroke-linecap="round"/>
<text transform="translate(69.80,534.70) scale(0.97,1)" font-size="7.25" fill="#e0e1e2" font-weight="normal" text-anchor="start"  stroke="#e0e1e2" stroke-width="0.3">max<tspan dx="4.3">Max: 3.106 GiB</tspan><tspan dx="4.3">Current: 3.106 GiB</tspan></text>
<path d="M271.90,409.20 L404.40,409.20 L404.40,484.2 L271.90,484.2 Z" fill="#6ed0e0" fill-opacity="0.12"/>
<path d="M271.90,472.90 L289.90,471.60 L404.40,471.40 L404.40,484.2 L271.90,484.2 Z" fill="#eab839" fill-opacity="0.12"/>
<path d="M271.90,473.80 L272.90,473.72 L273.91,473.63 L274.91,473.55 L275.92,473.47 L276.92,473.38 L277.92,473.30 L278.93,473.22 L279.93,473.13 L280.93,473.05 L281.94,472.97 L282.94,472.88 L283.95,472.80 L284.95,472.72 L285.95,472.63 L286.96,472.55 L287.96,472.47 L288.96,472.38 L289.97,472.30 L290.97,472.30 L291.98,472.30 L292.98,472.30 L293.98,472.30 L294.99,472.30 L295.99,472.30 L296.99,472.30 L298.00,472.30 L299.00,472.30 L300.01,472.30 L301.01,472.30 L302.01,472.30 L303.02,472.30 L304.02,472.30 L305.02,472.30 L306.03,472.30 L307.03,472.30 L308.04,472.30 L309.04,472.30 L310.04,472.30 L311.05,472.30 L312.05,472.30 L313.06,472.30 L314.06,472.30 L315.06,472.30 L316.07,472.30 L317.07,472.30 L318.07,472.30 L319.08,472.30 L320.08,472.30 L321.09,472.30 L322.09,472.30 L323.09,472.30 L324.10,472.30 L325.10,472.30 L326.10,472.30 L327.11,472.30 L328.11,472.30 L329.12,472.30 L330.12,472.30 L331.12,472.30 L332.13,472.30 L333.13,472.30 L334.13,472.30 L335.14,472.30 L336.14,472.30 L337.15,472.30 L338.15,472.30 L339.15,472.30 L340.16,472.30 L341.16,472.30 L342.17,472.30 L343.17,472.30 L344.17,472.30 L345.18,472.30 L346.18,472.30 L347.18,472.30 L348.19,472.30 L349.19,472.30 L350.20,472.30 L351.20,472.30 L352.20,472.30 L353.21,472.30 L354.21,472.30 L355.21,472.30 L356.22,472.30 L357.22,472.30 L358.23,472.30 L359.23,472.30 L360.23,472.30 L361.24,472.30 L362.24,472.30 L363.24,472.30 L364.25,472.30 L365.25,472.30 L366.26,472.30 L367.26,472.30 L368.26,472.30 L369.27,472.30 L370.27,472.30 L371.27,472.30 L372.28,472.30 L373.28,472.30 L374.29,472.30 L375.29,472.30 L376.29,472.30 L377.30,472.30 L378.30,472.30 L379.31,472.30 L380.31,472.30 L381.31,472.30 L382.32,472.30 L383.32,472.30 L384.32,472.30 L385.33,472.30 L386.33,472.30 L387.34,472.30 L388.34,472.30 L389.34,472.30 L390.35,472.30 L391.35,472.30 L392.35,472.30 L393.36,472.30 L394.36,472.30 L395.37,472.30 L396.37,472.30 L397.37,472.30 L398.38,472.30 L399.38,472.30 L400.38,472.30 L401.39,472.30 L402.39,472.30 L403.40,472.30 L404.40,472.30 L404.40,484.2 L271.90,484.2 Z" fill="#7eb26d" fill-opacity="0.12"/>
<path d="M271.9,399.5 H404.4" stroke="rgba(255,255,255,0.14)" stroke-width="1"/>
<text transform="translate(268.30,401.80) scale(0.915,1)" font-size="7.6" fill="#e0e1e2" font-weight="normal" text-anchor="end"  stroke="#e0e1e2" stroke-width="0.3">1.4 GiB</text>
<path d="M271.9,428.5 H404.4" stroke="rgba(255,255,255,0.14)" stroke-width="1"/>
<text transform="translate(268.30,430.40) scale(0.915,1)" font-size="7.6" fill="#e0e1e2" font-weight="normal" text-anchor="end"  stroke="#e0e1e2" stroke-width="0.3">954 MiB</text>
<path d="M271.9,456.5 H404.4" stroke="rgba(255,255,255,0.14)" stroke-width="1"/>
<text transform="translate(268.30,458.90) scale(0.915,1)" font-size="7.6" fill="#e0e1e2" font-weight="normal" text-anchor="end"  stroke="#e0e1e2" stroke-width="0.3">477 MiB</text>
<path d="M271.9,484.5 H404.4" stroke="rgba(255,255,255,0.14)" stroke-width="1"/>
<text transform="translate(268.30,486.50) scale(0.915,1)" font-size="7.6" fill="#e0e1e2" font-weight="normal" text-anchor="end"  stroke="#e0e1e2" stroke-width="0.3">0 B</text>
<path d="M299.5,399.5 V484.5" stroke="rgba(255,255,255,0.14)" stroke-width="1"/>
<text x="299.50" y="494.80" font-size="7.25" fill="#e0e1e2" font-weight="normal" text-anchor="middle"  stroke="#e0e1e2" stroke-width="0.3">16:00</text>
<path d="M343.5,399.5 V484.5" stroke="rgba(255,255,255,0.14)" stroke-width="1"/>
<text x="343.50" y="494.80" font-size="7.25" fill="#e0e1e2" font-weight="normal" text-anchor="middle"  stroke="#e0e1e2" stroke-width="0.3">00:00</text>
<path d="M387.5,399.5 V484.5" stroke="rgba(255,255,255,0.14)" stroke-width="1"/>
<text x="387.50" y="494.80" font-size="7.25" fill="#e0e1e2" font-weight="normal" text-anchor="middle"  stroke="#e0e1e2" stroke-width="0.3">08:00</text>
<path d="M271.90,409.20 L404.40,409.20" fill="none" stroke="#8ccad6" stroke-width="1" stroke-linejoin="round"/>
<path d="M271.90,472.90 L289.90,471.60 L404.40,471.40" fill="none" stroke="#d6cb8c" stroke-width="1" stroke-linejoin="round"/>
<path d="M271.90,473.80 L272.90,473.72 L273.91,473.63 L274.91,473.55 L275.92,473.47 L276.92,473.38 L277.92,473.30 L278.93,473.22 L279.93,473.13 L280.93,473.05 L281.94,472.97 L282.94,472.88 L283.95,472.80 L284.95,472.72 L285.95,472.63 L286.96,472.55 L287.96,472.47 L288.96,472.38 L289.97,472.30 L290.97,472.30 L291.98,472.30 L292.98,472.30 L293.98,472.30 L294.99,472.30 L295.99,472.30 L296.99,472.30 L298.00,472.30 L299.00,472.30 L300.01,472.30 L301.01,472.30 L302.01,472.30 L303.02,472.30 L304.02,472.30 L305.02,472.30 L306.03,472.30 L307.03,472.30 L308.04,472.30 L309.04,472.30 L310.04,472.30 L311.05,472.30 L312.05,472.30 L313.06,472.30 L314.06,472.30 L315.06,472.30 L316.07,472.30 L317.07,472.30 L318.07,472.30 L319.08,472.30 L320.08,472.30 L321.09,472.30 L322.09,472.30 L323.09,472.30 L324.10,472.30 L325.10,472.30 L326.10,472.30 L327.11,472.30 L328.11,472.30 L329.12,472.30 L330.12,472.30 L331.12,472.30 L332.13,472.30 L333.13,472.30 L334.13,472.30 L335.14,472.30 L336.14,472.30 L337.15,472.30 L338.15,472.30 L339.15,472.30 L340.16,472.30 L341.16,472.30 L342.17,472.30 L343.17,472.30 L344.17,472.30 L345.18,472.30 L346.18,472.30 L347.18,472.30 L348.19,472.30 L349.19,472.30 L350.20,472.30 L351.20,472.30 L352.20,472.30 L353.21,472.30 L354.21,472.30 L355.21,472.30 L356.22,472.30 L357.22,472.30 L358.23,472.30 L359.23,472.30 L360.23,472.30 L361.24,472.30 L362.24,472.30 L363.24,472.30 L364.25,472.30 L365.25,472.30 L366.26,472.30 L367.26,472.30 L368.26,472.30 L369.27,472.30 L370.27,472.30 L371.27,472.30 L372.28,472.30 L373.28,472.30 L374.29,472.30 L375.29,472.30 L376.29,472.30 L377.30,472.30 L378.30,472.30 L379.31,472.30 L380.31,472.30 L381.31,472.30 L382.32,472.30 L383.32,472.30 L384.32,472.30 L385.33,472.30 L386.33,472.30 L387.34,472.30 L388.34,472.30 L389.34,472.30 L390.35,472.30 L391.35,472.30 L392.35,472.30 L393.36,472.30 L394.36,472.30 L395.37,472.30 L396.37,472.30 L397.37,472.30 L398.38,472.30 L399.38,472.30 L400.38,472.30 L401.39,472.30 L402.39,472.30 L403.40,472.30 L404.40,472.30" fill="none" stroke="#8fb882" stroke-width="1" stroke-linejoin="round"/>
<path d="M249.4,508.0 H255.1" stroke="#7eb26d" stroke-width="2.3" stroke-linecap="round"/>
<text transform="translate(258.80,510.30) scale(0.97,1)" font-size="7.25" fill="#e0e1e2" font-weight="normal" text-anchor="start"  stroke="#e0e1e2" stroke-width="0.3">used<tspan dx="4.3">Max: 209 MiB</tspan><tspan dx="4.3">Current: 209 MiB</tspan></text>
<path d="M249.4,520.2 H255.1" stroke="#eab839" stroke-width="2.3" stroke-linecap="round"/>
<text transform="translate(258.80,522.50) scale(0.97,1)" font-size="7.25" fill="#e0e1e2" font-weight="normal" text-anchor="start"  stroke="#e0e1e2" stroke-width="0.3">committed<tspan dx="4.3">Max: 214 MiB</tspan><tspan dx="4.3">Current: 214 MiB</tspan></text>
<path d="M249.4,532.4 H255.1" stroke="#6ed0e0" stroke-width="2.3" stroke-linecap="round"/>
<text transform="translate(258.80,534.70) scale(0.97,1)" font-size="7.25" fill="#e0e1e2" font-weight="normal" text-anchor="start"  stroke="#e0e1e2" stroke-width="0.3">max<tspan dx="4.3">Max: 1.234 GiB</tspan><tspan dx="4.3">Current: 1.234 GiB</tspan></text>
<path d="M460.00,405.20 L592.90,405.20 L592.90,483.4 L460.00,483.4 Z" fill="#6ed0e0" fill-opacity="0.12"/>
<path d="M460.00,473.60 L592.90,473.60 L592.90,483.4 L460.00,483.4 Z" fill="#eab839" fill-opacity="0.12"/>
<path d="M460.00,475.20 L461.01,475.81 L462.01,475.81 L463.02,475.20 L464.03,474.59 L465.03,474.59 L466.04,475.20 L467.05,475.81 L468.05,475.81 L469.06,475.20 L470.07,474.59 L471.07,474.59 L472.08,475.20 L473.09,475.81 L474.10,475.81 L475.10,475.20 L476.11,474.59 L477.12,474.59 L478.12,475.20 L479.13,475.81 L480.14,475.81 L481.14,475.20 L482.15,474.59 L483.16,474.59 L484.16,475.20 L485.17,475.81 L486.18,475.81 L487.18,475.20 L488.19,474.59 L489.20,474.59 L490.20,475.20 L491.21,475.81 L492.22,475.81 L493.23,475.20 L494.23,474.59 L495.24,474.59 L496.25,475.20 L497.25,475.81 L498.26,475.81 L499.27,475.20 L500.27,474.59 L501.28,474.59 L502.29,475.20 L503.29,475.81 L504.30,475.81 L505.31,475.20 L506.31,474.59 L507.32,474.59 L508.33,475.20 L509.33,475.81 L510.34,475.81 L511.35,475.20 L512.35,474.59 L513.36,474.59 L514.37,475.20 L515.38,475.81 L516.38,475.81 L517.39,475.20 L518.40,474.59 L519.40,474.59 L520.41,475.20 L521.42,475.81 L522.42,475.81 L523.43,475.20 L524.44,474.59 L525.44,474.59 L526.45,475.20 L527.46,475.81 L528.46,475.81 L529.47,475.20 L530.48,474.59 L531.48,474.59 L532.49,475.20 L533.50,475.81 L534.50,475.81 L535.51,475.20 L536.52,474.59 L537.52,474.59 L538.53,475.20 L539.54,475.81 L540.55,475.81 L541.55,475.20 L542.56,474.59 L543.57,474.59 L544.57,475.20 L545.58,475.81 L546.59,475.81 L547.59,475.20 L548.60,474.59 L549.61,474.59 L550.61,475.20 L551.62,475.81 L552.63,475.81 L553.63,475.20 L554.64,474.59 L555.65,474.59 L556.65,475.20 L557.66,475.81 L558.67,475.81 L559.67,475.20 L560.68,474.59 L561.69,474.59 L562.70,475.20 L563.70,475.81 L564.71,475.81 L565.72,475.20 L566.72,474.59 L567.73,474.59 L568.74,475.20 L569.74,475.81 L570.75,475.81 L571.76,475.20 L572.76,474.59 L573.77,474.59 L574.78,475.20 L575.78,475.81 L576.79,475.81 L577.80,475.20 L578.80,474.59 L579.81,474.59 L580.82,475.20 L581.83,475.81 L582.83,475.81 L583.84,475.20 L584.85,474.59 L585.85,474.59 L586.86,475.20 L587.87,475.81 L588.87,475.81 L589.88,475.20 L590.89,474.59 L591.89,474.59 L592.90,475.20 L592.90,483.4 L460.00,483.4 Z" fill="#7eb26d" fill-opacity="0.12"/>
<path d="M460,399.5 H592.9" stroke="rgba(255,255,255,0.14)" stroke-width="1"/>
<text transform="translate(456.50,401.70) scale(0.915,1)" font-size="7.6" fill="#e0e1e2" font-weight="normal" text-anchor="end"  stroke="#e0e1e2" stroke-width="0.3">5 GiB</text>
<path d="M460,416.5 H592.9" stroke="rgba(255,255,255,0.14)" stroke-width="1"/>
<text transform="translate(456.50,418.60) scale(0.915,1)" font-size="7.6" fill="#e0e1e2" font-weight="normal" text-anchor="end"  stroke="#e0e1e2" stroke-width="0.3">4 GiB</text>
<path d="M460,433.5 H592.9" stroke="rgba(255,255,255,0.14)" stroke-width="1"/>
<text transform="translate(456.50,435.40) scale(0.915,1)" font-size="7.6" fill="#e0e1e2" font-weight="normal" text-anchor="end"  stroke="#e0e1e2" stroke-width="0.3">3 GiB</text>
<path d="M460,449.5 H592.9" stroke="rgba(255,255,255,0.14)" stroke-width="1"/>
<text transform="translate(456.50,452.20) scale(0.915,1)" font-size="7.6" fill="#e0e1e2" font-weight="normal" text-anchor="end"  stroke="#e0e1e2" stroke-width="0.3">2 GiB</text>
<path d="M460,466.5 H592.9" stroke="rgba(255,255,255,0.14)" stroke-width="1"/>
<text transform="translate(456.50,469.10) scale(0.915,1)" font-size="7.6" fill="#e0e1e2" font-weight="normal" text-anchor="end"  stroke="#e0e1e2" stroke-width="0.3">954 MiB</text>
<path d="M460,483.5 H592.9" stroke="rgba(255,255,255,0.14)" stroke-width="1"/>
<text transform="translate(456.50,485.70) scale(0.915,1)" font-size="7.6" fill="#e0e1e2" font-weight="normal" text-anchor="end"  stroke="#e0e1e2" stroke-width="0.3">0 B</text>
<path d="M487.5,399.5 V483.5" stroke="rgba(255,255,255,0.14)" stroke-width="1"/>
<text x="487.50" y="494.60" font-size="7.25" fill="#e0e1e2" font-weight="normal" text-anchor="middle"  stroke="#e0e1e2" stroke-width="0.3">16:00</text>
<path d="M531.5,399.5 V483.5" stroke="rgba(255,255,255,0.14)" stroke-width="1"/>
<text x="531.50" y="494.60" font-size="7.25" fill="#e0e1e2" font-weight="normal" text-anchor="middle"  stroke="#e0e1e2" stroke-width="0.3">00:00</text>
<path d="M575.5,399.5 V483.5" stroke="rgba(255,255,255,0.14)" stroke-width="1"/>
<text x="575.50" y="494.60" font-size="7.25" fill="#e0e1e2" font-weight="normal" text-anchor="middle"  stroke="#e0e1e2" stroke-width="0.3">08:00</text>
<path d="M460.00,405.20 L592.90,405.20" fill="none" stroke="#8ccad6" stroke-width="1" stroke-linejoin="round"/>
<path d="M460.00,473.60 L592.90,473.60" fill="none" stroke="#d6cb8c" stroke-width="1" stroke-linejoin="round"/>
<path d="M460.00,475.20 L461.01,475.81 L462.01,475.81 L463.02,475.20 L464.03,474.59 L465.03,474.59 L466.04,475.20 L467.05,475.81 L468.05,475.81 L469.06,475.20 L470.07,474.59 L471.07,474.59 L472.08,475.20 L473.09,475.81 L474.10,475.81 L475.10,475.20 L476.11,474.59 L477.12,474.59 L478.12,475.20 L479.13,475.81 L480.14,475.81 L481.14,475.20 L482.15,474.59 L483.16,474.59 L484.16,475.20 L485.17,475.81 L486.18,475.81 L487.18,475.20 L488.19,474.59 L489.20,474.59 L490.20,475.20 L491.21,475.81 L492.22,475.81 L493.23,475.20 L494.23,474.59 L495.24,474.59 L496.25,475.20 L497.25,475.81 L498.26,475.81 L499.27,475.20 L500.27,474.59 L501.28,474.59 L502.29,475.20 L503.29,475.81 L504.30,475.81 L505.31,475.20 L506.31,474.59 L507.32,474.59 L508.33,475.20 L509.33,475.81 L510.34,475.81 L511.35,475.20 L512.35,474.59 L513.36,474.59 L514.37,475.20 L515.38,475.81 L516.38,475.81 L517.39,475.20 L518.40,474.59 L519.40,474.59 L520.41,475.20 L521.42,475.81 L522.42,475.81 L523.43,475.20 L524.44,474.59 L525.44,474.59 L526.45,475.20 L527.46,475.81 L528.46,475.81 L529.47,475.20 L530.48,474.59 L531.48,474.59 L532.49,475.20 L533.50,475.81 L534.50,475.81 L535.51,475.20 L536.52,474.59 L537.52,474.59 L538.53,475.20 L539.54,475.81 L540.55,475.81 L541.55,475.20 L542.56,474.59 L543.57,474.59 L544.57,475.20 L545.58,475.81 L546.59,475.81 L547.59,475.20 L548.60,474.59 L549.61,474.59 L550.61,475.20 L551.62,475.81 L552.63,475.81 L553.63,475.20 L554.64,474.59 L555.65,474.59 L556.65,475.20 L557.66,475.81 L558.67,475.81 L559.67,475.20 L560.68,474.59 L561.69,474.59 L562.70,475.20 L563.70,475.81 L564.71,475.81 L565.72,475.20 L566.72,474.59 L567.73,474.59 L568.74,475.20 L569.74,475.81 L570.75,475.81 L571.76,475.20 L572.76,474.59 L573.77,474.59 L574.78,475.20 L575.78,475.81 L576.79,475.81 L577.80,475.20 L578.80,474.59 L579.81,474.59 L580.82,475.20 L581.83,475.81 L582.83,475.81 L583.84,475.20 L584.85,474.59 L585.85,474.59 L586.86,475.20 L587.87,475.81 L588.87,475.81 L589.88,475.20 L590.89,474.59 L591.89,474.59 L592.90,475.20" fill="none" stroke="#8fb882" stroke-width="1" stroke-linejoin="round"/>
<path d="M438.6,508.0 H444.3" stroke="#7eb26d" stroke-width="2.3" stroke-linecap="round"/>
<text transform="translate(447.30,510.30) scale(0.97,1)" font-size="7.25" fill="#e0e1e2" font-weight="normal" text-anchor="start"  stroke="#e0e1e2" stroke-width="0.3">used<tspan dx="4.3">Max: 528 MiB</tspan><tspan dx="4.3">Current: 508 MiB</tspan></text>
<path d="M438.6,520.2 H444.3" stroke="#eab839" stroke-width="2.3" stroke-linecap="round"/>
<text transform="translate(447.30,522.50) scale(0.97,1)" font-size="7.25" fill="#e0e1e2" font-weight="normal" text-anchor="start"  stroke="#e0e1e2" stroke-width="0.3">committed<tspan dx="4.3">Max: 572 MiB</tspan><tspan dx="4.3">Current: 572 MiB</tspan></text>
<path d="M438.6,532.4 H444.3" stroke="#6ed0e0" stroke-width="2.3" stroke-linecap="round"/>
<text transform="translate(447.30,534.70) scale(0.97,1)" font-size="7.25" fill="#e0e1e2" font-weight="normal" text-anchor="start"  stroke="#e0e1e2" stroke-width="0.3">max<tspan dx="4.3">Max: 4.340 GiB</tspan><tspan dx="4.3">Current: 4.340 GiB</tspan></text>
<path d="M644,399.5 H782.3" stroke="rgba(255,255,255,0.14)" stroke-width="1"/>
<text transform="translate(639.80,401.80) scale(0.915,1)" font-size="7.6" fill="#e0e1e2" font-weight="normal" text-anchor="end"  stroke="#e0e1e2" stroke-width="0.3">1.00 B</text>
<path d="M644,429.5 H782.3" stroke="rgba(255,255,255,0.14)" stroke-width="1"/>
<text transform="translate(639.80,432.05) scale(0.915,1)" font-size="7.6" fill="#e0e1e2" font-weight="normal" text-anchor="end"  stroke="#e0e1e2" stroke-width="0.3">0.75 B</text>
<path d="M644,460.5 H782.3" stroke="rgba(255,255,255,0.14)" stroke-width="1"/>
<text transform="translate(639.80,462.30) scale(0.915,1)" font-size="7.6" fill="#e0e1e2" font-weight="normal" text-anchor="end"  stroke="#e0e1e2" stroke-width="0.3">0.50 B</text>
<path d="M644,490.5 H782.3" stroke="rgba(255,255,255,0.14)" stroke-width="1"/>
<text transform="translate(639.80,492.55) scale(0.915,1)" font-size="7.6" fill="#e0e1e2" font-weight="normal" text-anchor="end"  stroke="#e0e1e2" stroke-width="0.3">0.25 B</text>
<path d="M644,520.5 H782.3" stroke="rgba(255,255,255,0.14)" stroke-width="1"/>
<text transform="translate(639.80,522.80) scale(0.915,1)" font-size="7.6" fill="#e0e1e2" font-weight="normal" text-anchor="end"  stroke="#e0e1e2" stroke-width="0.3">0 B</text>
<path d="M672.5,399.5 V520.5" stroke="rgba(255,255,255,0.14)" stroke-width="1"/>
<text x="672.50" y="531.20" font-size="7.25" fill="#e0e1e2" font-weight="normal" text-anchor="middle"  stroke="#e0e1e2" stroke-width="0.3">16:00</text>
<path d="M718.5,399.5 V520.5" stroke="rgba(255,255,255,0.14)" stroke-width="1"/>
<text x="718.50" y="531.20" font-size="7.25" fill="#e0e1e2" font-weight="normal" text-anchor="middle"  stroke="#e0e1e2" stroke-width="0.3">00:00</text>
<path d="M764.5,399.5 V520.5" stroke="rgba(255,255,255,0.14)" stroke-width="1"/>
<text x="764.50" y="531.20" font-size="7.25" fill="#e0e1e2" font-weight="normal" text-anchor="middle"  stroke="#e0e1e2" stroke-width="0.3">08:00</text>
<text transform="translate(705.10,447.30) scale(0.96,1)" font-size="8.9" fill="#e0e1e2" font-weight="normal" text-anchor="middle"  stroke="#e0e1e2" stroke-width="0.3">No data</text></svg>
</body></html>
